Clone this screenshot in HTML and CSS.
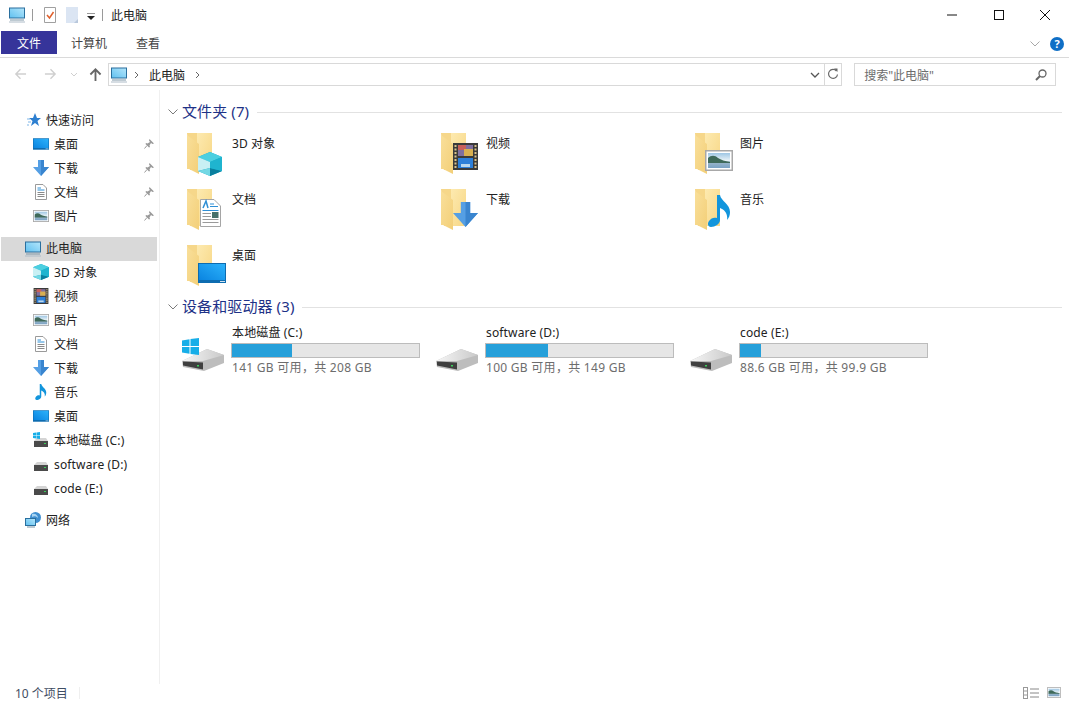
FILE: index.html
```html
<!DOCTYPE html>
<html lang="zh-CN">
<head>
<meta charset="utf-8">
<title>此电脑</title>
<link rel="stylesheet" href="styles.css">
</head>
<body>
<svg class="defs" aria-hidden="true">
  <defs>
    <linearGradient id="gFolder" x1="0" y1="0" x2="1" y2="1"><stop offset="0" stop-color="#fdeab0"/><stop offset="1" stop-color="#f7d684"/></linearGradient>
    <linearGradient id="gFlap" x1="0" y1="0" x2="1" y2="1"><stop offset="0" stop-color="#f9df9a"/><stop offset="1" stop-color="#f3cf78"/></linearGradient>
    <linearGradient id="gBlue" x1="0" y1="1" x2="1" y2="0"><stop offset="0" stop-color="#0a84e0"/><stop offset="1" stop-color="#2cb2fb"/></linearGradient>
    <linearGradient id="gPc" x1="0" y1="1" x2="1" y2="0"><stop offset="0" stop-color="#5fc0f0"/><stop offset="1" stop-color="#b5e6fb"/></linearGradient>
    <linearGradient id="gSky" x1="0" y1="0" x2="0" y2="1"><stop offset="0" stop-color="#9ec6e4"/><stop offset=".5" stop-color="#e8f2f6"/><stop offset=".6" stop-color="#9cb7cc"/><stop offset="1" stop-color="#7aa2c4"/></linearGradient>
    <linearGradient id="gDrive" x1="0" y1="0" x2="1" y2="0"><stop offset="0" stop-color="#f6f6f6"/><stop offset="1" stop-color="#c9c9c9"/></linearGradient>

    <symbol id="folder" viewBox="0 0 40 44">
      <path d="M0 0H25V37H3Z" fill="#f6d78a"/>
      <path d="M10 0H25V37H10Z" fill="url(#gFolder)"/>
      <path d="M0 2L12 11V41L2 36H0Z" fill="url(#gFlap)"/>
    </symbol>
    <symbol id="pc" viewBox="0 0 16 16">
      <rect x=".5" y="1" width="15" height="10" fill="url(#gPc)" stroke="#2a6f9e"/>
      <rect x="1" y="12.500" width="14" height="1" fill="#7f95a5"/>
      <rect x="0" y="14.500" width="16" height="1" fill="#aebcc7"/>
    </symbol>
    <symbol id="desktop" viewBox="0 0 28 20">
      <rect width="28" height="20" fill="#0d6cb0"/>
      <rect x="1" y="1" width="26" height="16" fill="url(#gBlue)"/>
      <rect x="22" y="18" width="5" height="1" fill="#fff" opacity=".8"/>
    </symbol>
    <symbol id="download" viewBox="0 0 16 16">
      <path d="M5 0H11V7H16L8 16L0 7H5Z" fill="#559fe4"/>
      <path d="M8 0H11V7H16L8 16Z" fill="#3a85cf"/>
    </symbol>
    <symbol id="doc" viewBox="0 0 12 16">
      <path d="M.5.500H8L11.500 4V15.500H.5Z" fill="#fff" stroke="#9a9a9a"/>
      <path d="M2.500 4H6M2.500 6H9.500" stroke="#2f8fd5"/>
      <path d="M2.500 8.500H9.500M2.500 10.500H9.500M2.500 12.500H9.500" stroke="#8a8a8a"/>
    </symbol>
    <symbol id="bigdoc" viewBox="0 0 21 28">
      <path d="M.5.500H14L20.500 7V27.500H.5Z" fill="#fff" stroke="#a5a5a5"/>
      <path d="M3 9L6 2L8 9" fill="none" stroke="#2f8fd5" stroke-width="1.500"/>
      <path d="M10 5H14M10 7.500H18" stroke="#2f8fd5"/>
      <path d="M2.500 11.500H18.500" stroke="#2f8fd5"/>
      <path d="M2.500 14.500H11M2.500 17.500H11M2.500 20.500H18.500M2.500 23.500H18.500" stroke="#9a9a9a"/>
      <rect x="12" y="13" width="6.500" height="6" fill="#46706a"/>
    </symbol>
    <symbol id="pic" viewBox="0 0 28 21">
      <rect x=".75" y=".75" width="26.500" height="19.500" fill="#fff" stroke="#a8a8a8" stroke-width="1.500"/>
      <rect x="3" y="3" width="22" height="15" fill="url(#gSky)"/>
      <path d="M3 8C6 5 10 5 13 8C16 10 20 11 25 12V13H3Z" fill="#3f6a5a"/>
    </symbol>
    <symbol id="video" viewBox="0 0 25 27">
      <rect width="25" height="27" fill="#3a3a3a"/>
      <rect x="5" y="2" width="15" height="11" fill="#7f6f9e"/>
      <rect x="5" y="2" width="8" height="5" fill="#c9605a"/>
      <rect x="11" y="6" width="9" height="7" fill="#d8b050"/>
      <rect x="5" y="15" width="15" height="10" fill="#2d7fd8"/>
      <rect x="8" y="21" width="9" height="3" fill="#b9d7ee"/>
      <path d="M2.500 2V25M22.500 2V25" stroke="#d8c08a" stroke-width="2" stroke-dasharray="2 1.500"/>
    </symbol>
    <symbol id="music" viewBox="0 0 23 32">
      <path d="M9 0H12C13 6 22 9 22 17C22 20 21 23 19 25C20 19 17 15 12 13V25C12 29 7 32 3 32C0 32 -1 29 1 26C3 23 6 22 9 23Z" fill="#1295dc"/>
    </symbol>
    <symbol id="cube" viewBox="0 0 24 24">
      <path d="M12 0L24 5V19L12 24L0 19V5Z" fill="#17a9c8"/>
      <path d="M12 0L24 5L12 10L0 5Z" fill="#4ccfe0"/>
      <path d="M0 5L12 10V16L0 19Z" fill="#c8f0f4"/>
      <path d="M0 19L12 16V24Z" fill="#73d8e4"/>
      <path d="M12 16L24 19L12 24Z" fill="#0a7f9e"/>
      <path d="M12 10L24 5V19L12 16Z" fill="#1fb4cf"/>
    </symbol>
    <symbol id="star" viewBox="0 0 16 16">
      <path d="M10 1L12 6H16L12.500 9L14 14L10 11L6 14L7.500 9L4 6H8Z" fill="#2d7fd0"/>
      <path d="M2 7H5M3 10H6M2 13H4" stroke="#7fb6e8"/>
    </symbol>
    <symbol id="pin" viewBox="0 0 10 10">
      <path d="M5.500 0L10 4.500L8.500 5L7 4L5.500 6.500L6 8L5 8.500L1.500 5L2 4L3.500 4.500L6 3L5 1.500Z" fill="#9a9a9a"/>
      <path d="M3 6.500L.5 9.500" stroke="#9a9a9a"/>
    </symbol>
    <symbol id="net" viewBox="0 0 16 16">
      <circle cx="10.500" cy="5.500" r="5.500" fill="#3f8fd0"/>
      <path d="M7 2C10 1 13 3 13 6C11 4 9 4 7 5Z" fill="#a8d4f2"/>
      <rect x=".5" y="6.500" width="10" height="7" fill="url(#gPc)" stroke="#2a6f9e"/>
      <rect x="2" y="14.500" width="8" height="1" fill="#7f95a5"/>
    </symbol>
    <symbol id="drive" viewBox="0 0 42 22">
      <path d="M0 12L25 0L42 6V14L22 22L1 18Z" fill="#bdbdbd"/>
      <path d="M0 12L25 0L42 6L21 12Z" fill="url(#gDrive)"/>
      <path d="M1 12.500L21 13.500V20.500L1 16.500Z" fill="#3f3f3f"/>
      <rect x="15" y="16" width="2" height="1.500" fill="#3ad05a"/>
    </symbol>
    <symbol id="minidrive" viewBox="0 0 14 9">
      <path d="M1 2L3 0H12L14 3H0Z" fill="#d4d4d4"/>
      <rect y="3" width="14" height="6" fill="#4a4a4a"/>
      <rect x="10" y="5" width="2" height="1" fill="#3ad05a"/>
    </symbol>
    <symbol id="win" viewBox="0 0 17 17">
      <path d="M0 2.500L7.500 1.200V8H0ZM8.500 1L17 0V8H8.500ZM0 9H7.500V15.800L0 14.500ZM8.500 9H17V17L8.500 16Z" fill="#17aee8"/>
    </symbol>
  </defs>
</svg>

<div class="window">
  <header class="titlebar">
    <svg class="qa-pc"><use href="#pc"/></svg>
    <span class="qa-sep"></span>
    <svg class="qa-check" viewBox="0 0 12 16"><path d="M.5.500H11.500V15.500H.5Z" fill="#fff" stroke="#a0a0a0"/><path d="M3 8L5.500 11L9.500 5" fill="none" stroke="#e0602c" stroke-width="1.500"/></svg>
    <svg class="qa-blank" viewBox="0 0 12 16"><path d="M0 0H12V16H0Z" fill="#dbe5f3"/><path d="M8 16L12 12V16Z" fill="#b9c8dc"/></svg>
    <svg class="qa-drop" viewBox="0 0 8 7"><path d="M0 0H8" stroke="#333"/><path d="M0 3H8L4 7Z" fill="#222"/></svg>
    <span class="qa-sep second"></span>
    <span class="title">此电脑</span>
    <div class="winctl">
      <svg class="ctl" viewBox="0 0 46 30"><path d="M17 15H27" stroke="#111"/></svg>
      <svg class="ctl" viewBox="0 0 46 30"><rect x="18.500" y="10.500" width="9" height="9" fill="none" stroke="#111"/></svg>
      <svg class="ctl" viewBox="0 0 46 30"><path d="M18 10L28 20M28 10L18 20" stroke="#111"/></svg>
    </div>
  </header>

  <nav class="tabs">
    <span class="tab active">文件</span>
    <span class="tab first">计算机</span>
    <span class="tab">查看</span>
    <svg class="ribbon-chev" viewBox="0 0 10 6"><path d="M.5.500L5 5L9.500.500" fill="none" stroke="#a8a8a8"/></svg>
    <span class="help">?</span>
  </nav>

  <div class="addressbar">
    <svg class="nav-ico" viewBox="0 0 14 12"><path d="M7 1L2 6L7 11M2 6H13" fill="none" stroke="#cfcfcf" stroke-width="1.500"/></svg>
    <svg class="nav-ico fwd" viewBox="0 0 14 12"><path d="M7 1L12 6L7 11M12 6H1" fill="none" stroke="#cfcfcf" stroke-width="1.500"/></svg>
    <svg class="nav-down" viewBox="0 0 8 5"><path d="M1 1L4 4L7 1" fill="none" stroke="#cfcfcf"/></svg>
    <svg class="nav-ico up" viewBox="0 0 14 14"><path d="M1.500 7L7 1.500L12.500 7M7 2V14" fill="none" stroke="#666" stroke-width="2"/></svg>
    <div class="path">
      <svg class="path-pc"><use href="#pc"/></svg>
      <svg class="crumb first" viewBox="0 0 5 8"><path d="M1 1L4 4L1 7" fill="none" stroke="#666"/></svg>
      <span class="path-text">此电脑</span>
      <svg class="crumb" viewBox="0 0 5 8"><path d="M1 1L4 4L1 7" fill="none" stroke="#666"/></svg>
      <svg class="path-down" viewBox="0 0 10 6"><path d="M1 1L5 5L9 1" fill="none" stroke="#555" stroke-width="1.300"/></svg>
      <svg class="refresh" viewBox="0 0 12 12"><path d="M9.500 2.500A4.500 4.500 0 1 0 10.500 6" fill="none" stroke="#666" stroke-width="1.200"/><path d="M7 0L10.500 0V3.500Z" fill="#666"/></svg>
    </div>
    <div class="search">
      <span class="search-text">搜索"此电脑"</span>
      <svg class="search-ico" viewBox="0 0 12 12"><circle cx="7.500" cy="4.500" r="3.500" fill="none" stroke="#666" stroke-width="1.300"/><path d="M5 7L1 11" stroke="#666" stroke-width="2"/></svg>
    </div>
  </div>

  <div class="main">
    <aside class="sidebar">
      <div class="row top"><svg class="ni"><use href="#star"/></svg>快速访问</div>
      <div class="row"><svg class="ni"><use href="#desktop"/></svg>桌面<svg class="pin"><use href="#pin"/></svg></div>
      <div class="row"><svg class="ni"><use href="#download"/></svg>下载<svg class="pin"><use href="#pin"/></svg></div>
      <div class="row"><svg class="ni"><use href="#doc"/></svg>文档<svg class="pin"><use href="#pin"/></svg></div>
      <div class="row"><svg class="ni"><use href="#pic"/></svg>图片<svg class="pin"><use href="#pin"/></svg></div>
      <div class="row top selected"><svg class="ni"><use href="#pc"/></svg>此电脑</div>
      <div class="row latin"><svg class="ni"><use href="#cube"/></svg>3D 对象</div>
      <div class="row"><svg class="ni"><use href="#video"/></svg>视频</div>
      <div class="row"><svg class="ni"><use href="#pic"/></svg>图片</div>
      <div class="row"><svg class="ni"><use href="#doc"/></svg>文档</div>
      <div class="row"><svg class="ni"><use href="#download"/></svg>下载</div>
      <div class="row"><svg class="ni"><use href="#music"/></svg>音乐</div>
      <div class="row"><svg class="ni"><use href="#desktop"/></svg>桌面</div>
      <div class="row latin"><svg class="ni" viewBox="0 0 16 16"><use href="#minidrive" x="1" y="6" width="14" height="9"/><use href="#win" x="0" y="0" width="7" height="7"/></svg>本地磁盘 (C:)</div>
      <div class="row latin"><svg class="ni" viewBox="0 0 16 16"><use href="#minidrive" x="1" y="6" width="14" height="9"/></svg>software (D:)</div>
      <div class="row latin"><svg class="ni" viewBox="0 0 16 16"><use href="#minidrive" x="1" y="6" width="14" height="9"/></svg>code (E:)</div>
      <div class="row top gap-net"><svg class="ni"><use href="#net"/></svg>网络</div>
    </aside>

    <section class="content">
      <div class="group-head">
        <svg class="group-chev" viewBox="0 0 10 6"><path d="M.5.500L5 5L9.500.500" fill="none" stroke="#7a7a7a"/></svg>
        <span class="group-name">文件夹 (7)</span>
        <span class="group-rule"></span>
      </div>
      <div class="folders">
        <div class="folder"><svg class="big" viewBox="0 0 45 44"><use href="#folder" width="40" height="44"/><use href="#cube" x="11" y="19" width="24" height="24"/></svg><span>3D 对象</span></div>
        <div class="folder"><svg class="big" viewBox="0 0 45 44"><use href="#folder" width="40" height="44"/><use href="#video" x="12" y="10" width="25" height="27"/></svg><span>视频</span></div>
        <div class="folder"><svg class="big" viewBox="0 0 45 44"><use href="#folder" width="40" height="44"/><use href="#pic" x="10" y="17" width="28" height="21"/></svg><span>图片</span></div>
        <div class="folder"><svg class="big" viewBox="0 0 45 44"><use href="#folder" width="40" height="44"/><use href="#bigdoc" x="13" y="10" width="21" height="28"/></svg><span>文档</span></div>
        <div class="folder"><svg class="big" viewBox="0 0 45 44"><use href="#folder" width="40" height="44"/><use href="#download" x="12" y="12" width="25" height="27"/></svg><span>下载</span></div>
        <div class="folder"><svg class="big" viewBox="0 0 45 44"><use href="#folder" width="40" height="44"/><use href="#music" x="13" y="6" width="23" height="32"/></svg><span>音乐</span></div>
        <div class="folder"><svg class="big" viewBox="0 0 45 44"><use href="#folder" width="40" height="44"/><use href="#desktop" x="11" y="18" width="28" height="20"/></svg><span>桌面</span></div>
      </div>

      <div class="group-head second">
        <svg class="group-chev" viewBox="0 0 10 6"><path d="M.5.500L5 5L9.500.500" fill="none" stroke="#7a7a7a"/></svg>
        <span class="group-name">设备和驱动器 (3)</span>
        <span class="group-rule"></span>
      </div>
      <div class="drives">
        <div class="drive">
          <svg class="drive-ico" viewBox="0 0 42 34"><use href="#drive" y="11" width="42" height="22"/><use href="#win" x="0" y="0" width="17" height="17"/></svg>
          <div class="drive-info">
            <div class="drive-name">本地磁盘 (C:)</div>
            <div class="bar"><div class="fill" style="width:60px"></div></div>
            <div class="drive-size">141 GB 可用，共 208 GB</div>
          </div>
        </div>
        <div class="drive">
          <svg class="drive-ico" viewBox="0 0 42 34"><use href="#drive" y="11" width="42" height="22"/></svg>
          <div class="drive-info">
            <div class="drive-name">software (D:)</div>
            <div class="bar"><div class="fill" style="width:62px"></div></div>
            <div class="drive-size">100 GB 可用，共 149 GB</div>
          </div>
        </div>
        <div class="drive">
          <svg class="drive-ico" viewBox="0 0 42 34"><use href="#drive" y="11" width="42" height="22"/></svg>
          <div class="drive-info">
            <div class="drive-name">code (E:)</div>
            <div class="bar"><div class="fill" style="width:21px"></div></div>
            <div class="drive-size">88.6 GB 可用，共 99.9 GB</div>
          </div>
        </div>
      </div>
    </section>
  </div>

  <footer class="status">
    <span class="count">10 个项目</span>
    <span class="status-sep"></span>
    <svg class="view-details" viewBox="0 0 16 12"><rect x=".5" y=".5" width="4" height="11" fill="#fff" stroke="#999"/><path d="M1 4H4M1 8H4" stroke="#999"/><path d="M7 2H16M7 6H16M7 10H16" stroke="#888"/></svg>
    <svg class="view-thumb"><use href="#pic"/></svg>
  </footer>
</div>
</body>
</html>
```

FILE: styles.css
```css
* { box-sizing: border-box; }
html, body { margin: 0; height: 100%; background: #fff; overflow: hidden; }
body {
  font-family: "Noto Sans", "Noto Sans CJK SC", sans-serif;
  font-size: 12px;
  color: #222;
}
.defs { position: absolute; width: 0; height: 0; }
.window { height: 707px; display: flex; flex-direction: column; }

/* title bar */
.titlebar { height: 30px; display: flex; align-items: center; padding-left: 9px; flex: none; }
.qa-pc { width: 16px; height: 16px; margin-right: 7px; }
.qa-sep { width: 1px; height: 12px; background: #9a9a9a; }
.qa-sep.second { margin-left: 7px; }
.qa-check { width: 12px; height: 16px; margin-left: 11px; }
.qa-blank { width: 12px; height: 16px; margin-left: 10px; }
.qa-drop { width: 8px; height: 7px; margin-left: 9px; margin-top: 3px; }
.title { margin-left: 8px; color: #222; }
.winctl { margin-left: auto; display: flex; margin-right: 1px; }
.ctl { width: 46px; height: 30px; }

/* tabs */
.tabs {
  height: 28px; flex: none; display: flex; align-items: flex-start;
  padding: 1px 5px 0 1px; border-bottom: 1px solid #dadada;
}
.tab { height: 23px; line-height: 25px; color: #444; margin-right: 29px; }
.tab.first { margin-left: 14px; }
.tab.active { width: 56px; margin: 0; background: #36349a; color: #fff; text-align: center; }
.ribbon-chev { width: 10px; height: 6px; margin-left: auto; margin-top: 10px; }
.help {
  width: 14px; height: 14px; margin: 6px 0 0 10px; border-radius: 50%;
  background: #0f6fc6; color: #fff; font-weight: 700; font-size: 11px; line-height: 14px; text-align: center;
}

/* address bar */
.addressbar { height: 32px; flex: none; display: flex; align-items: flex-start; padding: 5px 13px 0 14px; }
.nav-ico { width: 13px; height: 12px; margin-top: 5px; }
.nav-ico.fwd { margin-left: 17px; }
.nav-down { width: 8px; height: 5px; margin: 9px 0 0 13px; }
.nav-ico.up { margin-left: 11px; height: 13px; }
.path {
  width: 735px; height: 23px; margin-left: 6px; border: 1px solid #d9d9d9;
  display: flex; align-items: center; padding-left: 2px;
}
.path-pc { width: 16px; height: 16px; }
.crumb { width: 5px; height: 8px; margin-left: 10px; }
.crumb.first { margin-left: 7px; }
.path-text { margin-left: 10px; }
.path-down { width: 10px; height: 6px; margin-left: auto; }
.refresh { width: 17px; height: 21px; margin-left: 4px; border-left: 1px solid #d9d9d9; padding: 4px 2px; }
.search {
  width: 202px; height: 23px; margin-left: 12px; border: 1px solid #d9d9d9;
  display: flex; align-items: center; padding: 0 8px 0 9px;
}
.search-text { color: #6d6d6d; }
.search-ico { width: 12px; height: 12px; margin-left: auto; }

/* main */
.main { height: 594px; flex: none; display: flex; }
.sidebar { width: 160px; flex: none; padding: 18px 2px 0 1px; border-right: 1px solid #f0f0f0; }
.row { height: 24px; display: flex; align-items: center; padding-left: 32px; color: #222; }
.row.top { padding-left: 24px; }
.row.latin { letter-spacing: .15px; }
.row.selected { background: #d9d9d9; margin: 9px 0 -1px; padding-bottom: 2px; }
.gap-net { margin-top: 8px; }
.ni { width: 16px; height: 16px; margin-right: 5px; flex: none; }
.selected .ni { margin-top: 2px; }
.pin { width: 10px; height: 10px; margin-left: auto; margin-right: 3px; }

/* content */
.content { flex: 1; padding: 8px 7px 0 8px; }
.group-head { height: 24px; display: flex; align-items: center; }
.group-head.second { margin-top: 4px; }
.group-chev { width: 10px; height: 6px; flex: none; margin-top: 4px; }
.group-name { font-size: 15px; color: #1e3287; margin-left: 4px; letter-spacing: .1px; }
.group-rule { flex: 1; height: 1px; background: #e2e2e2; margin: 4px 0 0 8px; }
.folders {
  display: grid; grid-template-columns: repeat(3, 254px); grid-auto-rows: 44px; row-gap: 12px;
  margin: 11px 0 0 19px;
}
.folder { display: flex; align-items: flex-start; }
.folder span { line-height: 22px; letter-spacing: .1px; }
.big { width: 45px; height: 44px; flex: none; }
.drives {
  display: grid; grid-template-columns: repeat(3, 254px);
  margin: 8px 0 0 14px;
}
.drive { display: flex; }
.drive-ico { width: 42px; height: 34px; margin-top: 13px; flex: none; }
.drive-info { margin-left: 7px; width: 189px; }
.drive-name { height: 18px; line-height: 15px; padding-left: 1px; letter-spacing: .15px; }
.bar { height: 15px; background: #e6e6e6; border: 1px solid #bcbcbc; }
.fill { height: 13px; background: #26a0da; }
.drive-size { line-height: 20px; color: #6d6d6d; padding-left: 1px; letter-spacing: .28px; }

/* status */
.status { height: 23px; flex: none; display: flex; align-items: center; padding: 0 8px 6px 15px; }
.count { color: #3f4d63; }
.status-sep { width: 1px; height: 12px; background: #efefef; margin-left: 11px; }
.view-details { width: 16px; height: 12px; margin-left: auto; }
.view-thumb { width: 14px; height: 11px; margin-left: 8px; }
```
